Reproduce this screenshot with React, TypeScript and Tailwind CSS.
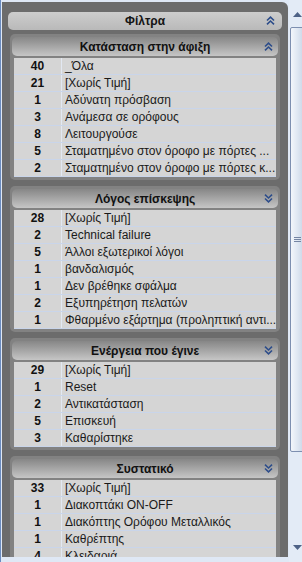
import React from "react";

type Row = [string, string];
type Section = { title: string; up: boolean; rows: Row[] };

const sections: Section[] = [
  {
    title: "Κατάσταση στην άφιξη",
    up: true,
    rows: [
      ["40", "_Όλα"],
      ["21", "[Χωρίς Τιμή]"],
      ["1", "Αδύνατη πρόσβαση"],
      ["3", "Ανάμεσα σε ορόφους"],
      ["8", "Λειτουργούσε"],
      ["5", "Σταματημένο στον όροφο με πόρτες ..."],
      ["2", "Σταματημένο στον όροφο με πόρτες κ..."],
    ],
  },
  {
    title: "Λόγος επίσκεψης",
    up: false,
    rows: [
      ["28", "[Χωρίς Τιμή]"],
      ["2", "Technical failure"],
      ["5", "Άλλοι εξωτερικοί λόγοι"],
      ["1", "βανδαλισμός"],
      ["1", "Δεν βρέθηκε σφάλμα"],
      ["2", "Εξυπηρέτηση πελατών"],
      ["1", "Φθαρμένο εξάρτημα (προληπτική αντι..."],
    ],
  },
  {
    title: "Ενέργεια που έγινε",
    up: false,
    rows: [
      ["29", "[Χωρίς Τιμή]"],
      ["1", "Reset"],
      ["2", "Αντικατάσταση"],
      ["5", "Επισκευή"],
      ["3", "Καθαρίστηκε"],
    ],
  },
  {
    title: "Συστατικό",
    up: false,
    rows: [
      ["33", "[Χωρίς Τιμή]"],
      ["1", "Διακοπτάκι ON-OFF"],
      ["1", "Διακόπτης Ορόφου Μεταλλικός"],
      ["1", "Καθρέπτης"],
      ["4", "Κλειδαριά"],
    ],
  },
];

function Chevrons({ up }: { up: boolean }) {
  return (
    <svg width="9" height="9" viewBox="0 0 9 9" className="shrink-0">
      {up ? (
        <g fill="none" stroke="#2d4d8a" strokeWidth="1.6">
          <path d="M1 4.5 L4.5 1.2 L8 4.5" />
          <path d="M1 8.3 L4.5 5 L8 8.3" />
        </g>
      ) : (
        <g fill="none" stroke="#2d4d8a" strokeWidth="1.6">
          <path d="M1 0.7 L4.5 4 L8 0.7" />
          <path d="M1 4.5 L4.5 7.8 L8 4.5" />
        </g>
      )}
    </svg>
  );
}

function SectionBox({ s }: { s: Section }) {
  return (
    <div className="mx-[2px] rounded-[5px] bg-[#828282] px-[2px] pt-[3px] pb-[3px]">
      <div className="relative flex h-[19px] items-center justify-center rounded-[5px] bg-gradient-to-b from-[#878787] to-[#c6c6c6]">
        <span className="text-[12px] font-bold text-[#111]">{s.title}</span>
        <span className="absolute right-[5px] top-[5px]">
          <Chevrons up={s.up} />
        </span>
      </div>
      <div className="mx-[2px] mt-[2px] bg-[#d5d5d5]">
        {s.rows.map((r, i) => (
          <div
            key={i}
            className="flex h-[17px] border-b border-[#c9d5ea] leading-[16px]"
          >
            <div className="w-[48px] shrink-0 border-r border-[#e2e8f2] text-center text-[12px] font-bold text-[#111]">
              {r[0]}
            </div>
            <div className="min-w-0 flex-1 overflow-hidden whitespace-nowrap pl-[3px] text-[12px] text-[#1a1a1a]">
              {r[1]}
            </div>
          </div>
        ))}
      </div>
    </div>
  );
}

function Scrollbar() {
  return (
    <div className="flex h-full w-[17px] flex-col items-center bg-[#e3ebf6] pt-[12px]">
      <svg width="9" height="5" viewBox="0 0 9 5">
        <path d="M0 5 L4.5 0 L9 5 Z" fill="#4e6286" />
      </svg>
      <div className="mt-[10px] flex h-[425px] w-[15px] items-center justify-center rounded-[2px] border border-[#7d8fb0] bg-gradient-to-r from-[#f3f6fb] via-[#dfe7f2] to-[#c9d5e6]">
        <div className="flex flex-col gap-[1px]">
          <div className="h-px w-[7px] bg-[#7585a3]" />
          <div className="h-px w-[7px] bg-[#7585a3]" />
          <div className="h-px w-[7px] bg-[#7585a3]" />
        </div>
      </div>
      <div className="flex-1" />
      <svg width="9" height="5" viewBox="0 0 9 5" className="mb-[12px]">
        <path d="M0 0 L4.5 5 L9 0 Z" fill="#4e6286" />
      </svg>
    </div>
  );
}

export default function App() {
  return (
    <div
      className="flex h-[562px] w-[302px] overflow-hidden border-l border-[#6a8bbf] bg-[#dfe8f5]"
      style={{ fontFamily: '"Liberation Sans", Arial, sans-serif' }}
    >
      <div className="flex h-full flex-1 flex-col pt-[2px] pb-[5px] pl-[1px]">
        <div className="flex-1 overflow-hidden rounded-tr-[6px] bg-[#6c6c6c] px-[6px] pt-[10px]">
          <div className="relative flex h-[18px] items-center justify-center rounded-[5px] bg-gradient-to-b from-[#cdcdcd] to-[#b9b9b9]">
            <span className="text-[12px] font-bold text-[#151515]">Φίλτρα</span>
            <span className="absolute right-[7px] top-[4px]">
              <Chevrons up={true} />
            </span>
          </div>
          <div className="mt-[4px] flex flex-col gap-[6px]">
            {sections.map((s, i) => (
              <SectionBox key={i} s={s} />
            ))}
          </div>
        </div>
      </div>
      <div className="h-full pl-[1px]">
        <Scrollbar />
      </div>
    </div>
  );
}
